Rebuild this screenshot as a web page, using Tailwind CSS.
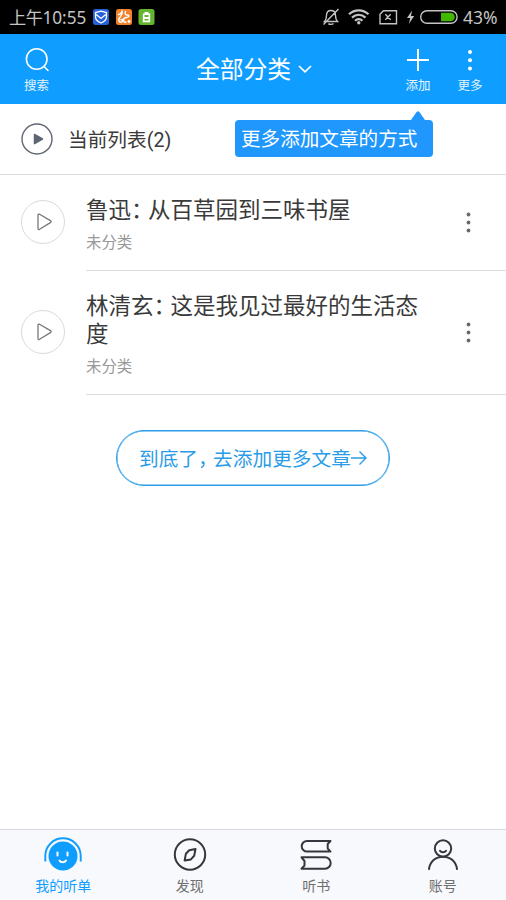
<!DOCTYPE html>
<html lang="zh-CN">
<head>
<meta charset="utf-8">
<title>全部分类</title>
<script src="https://cdn.jsdelivr.net/npm/@tailwindcss/browser@4"></script>
</head>
<body class="bg-white">
<div class="relative flex h-[900px] w-[506px] flex-col overflow-hidden bg-white font-['Roboto','Noto_Sans_CJK_SC',sans-serif]">

  <!-- Status bar -->
  <div class="flex h-[34px] shrink-0 items-center bg-black pl-[9px] text-[#c4c4c4]">
    <div class="w-[84px] whitespace-nowrap pt-0.5 font-['Noto_Sans','Noto_Sans_CJK_SC',sans-serif] text-[17.2px] leading-[34px]"><span class="tracking-[-0.5px]">上午</span>10:55</div>
    <svg class="h-4 w-[62px]" viewBox="0 0 62 16" fill="none">
      <rect width="16" height="16" rx="2.5" fill="#2561d8"/>
      <path d="M8 2.200 13.500 3.600V8c0 2.600-2 4.500-5.500 6C4.500 12.500 2.500 10.600 2.500 8V3.600ZM3.200 5.500 8 9.500l4.800-4" stroke="#fff" stroke-width="1.300"/>
      <rect x="23" width="16" height="16" rx="2.500" fill="#f0822b"/>
      <path d="M25.500 5.500c1.500 0 2.500-1 3.500-3 .5 2 0 3.500-1.500 5-1.500 1.500-2 3-1.500 4.500.6 1.600 3 1.500 3.500 0 .4-1.200-.6-2-1.500-1.200M32.500 2.500c-.8 2-.5 3.500 1.500 3.500s2.500 1 1 2-4 0-4.500 2.500c-.3 2 1 3 2.500 2.500" stroke="#fff" stroke-width="1.500" stroke-linecap="round"/>
      <circle cx="36" cy="12.500" r="1.400" fill="#fff"/>
      <rect x="45.500" width="16" height="16" rx="2.500" fill="#63b52f"/>
      <path d="M51.500 3h4v1.500H57.200V13.200H49.800V4.500h1.700Z" fill="#fff"/>
      <path d="M51.500 6h4v2h-4zM51.500 10h4v1.500h-4z" fill="#63b52f"/>
    </svg>
    <svg class="ml-[167px] h-[34px] w-[137px]" viewBox="322 0 137 34" fill="none" stroke="#c4c4c4" stroke-width="1.400">
      <path d="M324.500 21.500c1.500-1.500 2-2.800 2-6 0-3 1.700-5 4.500-5s4.500 2 4.500 5c0 3.200.5 4.500 2 6ZM328.500 23.500c.8 1.200 4 1.200 5 0M338.500 9 323.500 24.500"/>
      <g stroke-width="2.200"><path d="M349 14.300c5.500-5.300 14-5.300 19.500 0M352 17.600c4-3.800 9.500-3.800 13.500 0M355 20.700c2.200-2 5.300-2 7.500 0"/></g>
      <circle cx="358.800" cy="22.700" r="1.700" fill="#c4c4c4" stroke="none"/>
      <path d="M383.500 10.700H396.500V23.700H380V14.200ZM385.300 14.300l5.400 5.400M390.700 14.300l-5.400 5.400"/>
      <path d="M412 10.500 407 18h3.200l-1.400 6 5.400-8H411Z" fill="#c4c4c4" stroke="none"/>
      <rect x="420.700" y="10.700" width="36.400" height="12.600" rx="6.300"/>
      <path d="M441 12.700h9.500a4.300 4.300 0 0 1 0 8.600H441Z" fill="#43b800" stroke="none"/>
    </svg>
    <div class="ml-[4px] font-['Noto_Sans',sans-serif] text-[17.500px] leading-[34px]">43%</div>
  </div>

  <!-- Header -->
  <div class="flex h-[70px] shrink-0 justify-between bg-[#0f9dff] px-[10px] text-white">
    <div class="flex w-[53px] flex-col items-center pt-[13px]">
      <svg class="h-[26px] w-[26px]" viewBox="0 0 26 26" fill="none" stroke="currentColor" stroke-width="1.600" stroke-linecap="round"><circle cx="12.700" cy="12" r="10.300"/><path d="m20 19.500 4 4"/></svg>
      <span class="mt-1 text-[12.500px] leading-[18px] text-white/90">搜索</span>
    </div>
    <div class="ml-[53px] flex items-center">
      <span class="pt-[3px] text-[23.800px] leading-[67px]">全部分类</span>
      <svg class="ml-[7px] h-2 w-[14px]" viewBox="0 0 14 8" fill="none" stroke="currentColor" stroke-width="1.700"><path d="m1 1 6 5.800L13 1"/></svg>
    </div>
    <div class="flex">
      <div class="flex w-[52px] flex-col items-center pt-[13px]">
        <svg class="h-[26px] w-[26px]" viewBox="0 0 26 26" stroke="currentColor" stroke-width="2"><path d="M13 2v22M2 13h22"/></svg>
        <span class="mt-1 text-[12.500px] leading-[18px] text-white/90">添加</span>
      </div>
      <div class="flex w-[52px] flex-col items-center pt-[13px]">
        <svg class="h-[26px] w-[26px]" viewBox="0 0 26 26" fill="currentColor"><circle cx="13" cy="5" r="2"/><circle cx="13" cy="13.300" r="2"/><circle cx="13" cy="21.600" r="2"/></svg>
        <span class="mt-1 text-[12.500px] leading-[18px] text-white/90">更多</span>
      </div>
    </div>
  </div>

  <!-- Tooltip -->
  <div class="absolute left-[235px] top-[111px] w-[198px]">
    <svg class="ml-[176px] h-[9px] w-[14px]" viewBox="0 0 14 9" fill="#1f97fd"><path d="M0 9 5.600 1Q7-.7 8.400 1L14 9Z"/></svg>
    <div class="h-[37px] whitespace-nowrap rounded-[4px] bg-[#1f97fd] pl-[6px] pt-px text-[19.600px] leading-[37px] text-white">更多添加文章的方式</div>
  </div>

  <!-- Current list -->
  <div class="flex h-[71px] shrink-0 items-center border-b border-[#dcdcdc] pl-[21px] text-[#3a3a3a]">
    <svg class="h-8 w-8" viewBox="0 0 32 32"><circle cx="16" cy="16" r="15" fill="none" stroke="#5f6570" stroke-width="1.400"/><path d="M13.500 11.500 21.500 16l-8 4.700Z" fill="#5f6673" stroke="#5f6673" stroke-width="1.500" stroke-linejoin="round"/></svg>
    <span class="ml-[15px] pt-1 text-[19.700px] leading-[28px]">当前列表(2)</span>
  </div>

  <!-- Articles -->
  <div class="flex h-24 shrink-0 items-center">
    <svg class="mb-[2px] ml-[20px] h-[46px] w-[46px] shrink-0" viewBox="0 0 46 46" fill="none"><circle cx="23" cy="23" r="21.500" stroke="#dadada"/><path d="M18 16.300q0-1.800 1.600-1L30.400 21.600q1.600 1 0 2L19.600 30.300q-1.600.8-1.600-1Z" stroke="#777" stroke-width="1.300"/></svg>
    <div class="ml-[20px] flex h-full flex-1 border-b border-[#dcdcdc]">
      <div class="w-[345px] pt-[21px]">
        <div class="text-[22.500px] leading-7 text-[#3a3a3a]">鲁迅<span class="mr-[5.750px] [font-feature-settings:'halt']">：</span>从百草园到三味书屋</div>
        <div class="mt-2 text-[15.400px] leading-[22px] text-[#999]">未分类</div>
      </div>
      <svg class="ml-[33px] h-[22px] w-[9px] self-center" viewBox="0 0 9 22" fill="#6b6b6b"><circle cx="4.500" cy="2.500" r="1.900"/><circle cx="4.500" cy="10.500" r="1.900"/><circle cx="4.500" cy="18.500" r="1.900"/></svg>
    </div>
  </div>
  <div class="flex h-[124px] shrink-0 items-center">
    <svg class="mb-[2px] ml-[20px] h-[46px] w-[46px] shrink-0" viewBox="0 0 46 46" fill="none"><circle cx="23" cy="23" r="21.500" stroke="#dadada"/><path d="M18 16.300q0-1.800 1.600-1L30.400 21.600q1.600 1 0 2L19.600 30.300q-1.600.8-1.600-1Z" stroke="#777" stroke-width="1.300"/></svg>
    <div class="ml-[20px] flex h-full flex-1 border-b border-[#dcdcdc]">
      <div class="w-[345px] pt-[21px]">
        <div class="text-[22.500px] leading-7 text-[#3a3a3a]">林清玄<span class="mr-[5.750px] [font-feature-settings:'halt']">：</span>这是我见过最好的生活态度</div>
        <div class="mt-2 text-[15.400px] leading-[22px] text-[#999]">未分类</div>
      </div>
      <svg class="ml-[33px] h-[22px] w-[9px] self-center" viewBox="0 0 9 22" fill="#6b6b6b"><circle cx="4.500" cy="2.500" r="1.900"/><circle cx="4.500" cy="10.500" r="1.900"/><circle cx="4.500" cy="18.500" r="1.900"/></svg>
    </div>
  </div>

  <!-- Add more -->
  <button class="ml-[116px] mt-[35px] flex h-14 w-[274px] shrink-0 items-center whitespace-nowrap rounded-full border border-[#2a9ce8] pl-[22px] text-[19.700px] text-[#2a9ce8] shadow-[inset_0_0_0_0.500px_#2a9ce8]">
    <span class="pt-[3px]">到底了<span class="mr-[5.200px] [font-feature-settings:'halt']">，</span>去添加更多文章</span>
    <svg class="h-4 w-4" viewBox="0 0 16 16" fill="none" stroke="currentColor" stroke-width="1.400"><path d="M0 8h15M8.500 1.500 15 8l-6.500 6.500"/></svg>
  </button>

  <!-- Tab bar -->
  <div class="mt-auto grid h-[71px] shrink-0 grid-cols-4 border-t border-[#d6d8da] bg-[#f7f9fc] text-[14px] leading-5 text-[#6e6e6e]">
    <div class="flex flex-col items-center pt-[6px] text-[#0f9dff]">
      <svg class="h-10 w-10" viewBox="0 0 40 40" fill="none"><path d="M2.300 25.500V20a17.700 17.700 0 0 1 35.400 0v5.500" stroke="currentColor" stroke-width="1.900"/><circle cx="20" cy="20" r="14.500" fill="currentColor"/><path d="M14.500 16.500v3M24.500 16.500v3M16.500 24.500c1.300 2.300 5 2.300 6.500 0" stroke="#fff" stroke-width="2" stroke-linecap="round"/></svg>
      <span>我的听单</span>
    </div>
    <div class="flex flex-col items-center pt-[6px]">
      <svg class="h-10 w-10" viewBox="0 0 40 40" fill="none" stroke="#34373d" stroke-width="2" stroke-linejoin="round"><circle cx="20" cy="18.500" r="15.200"/><path d="m25.500 13-1.300 6.800-3.300 3.600-6.300 1.200 1.300-6.800 3.300-3.600Z"/></svg>
      <span>发现</span>
    </div>
    <div class="flex flex-col items-center pt-[6px]">
      <svg class="h-10 w-10" viewBox="0 0 40 40" fill="none" stroke="#34373d" stroke-width="2" stroke-linejoin="round"><path d="M34.500 5H11a5.300 5.300 0 0 0 0 10.600H34.500L31.700 12.500V8ZM5.500 21.300H29a5.700 5.700 0 0 1 0 11.400H5.500L8.500 29.500V25Z"/></svg>
      <span>听书</span>
    </div>
    <div class="flex flex-col items-center pt-[6px]">
      <svg class="h-10 w-10" viewBox="0 0 40 40" fill="none" stroke="#34373d" stroke-width="2" stroke-linecap="round"><circle cx="20" cy="12.500" r="8.200"/><path d="M17 14.800c1.200 2 4.800 2 6 0M6 33c1-7.500 6.500-12.300 14-12.300S33 25.500 34 33"/></svg>
      <span>账号</span>
    </div>
  </div>
</div>
</body>
</html>
